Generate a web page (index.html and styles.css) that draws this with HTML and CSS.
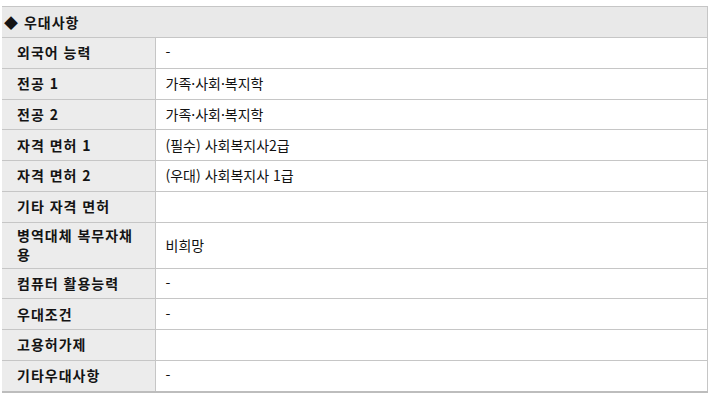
FILE: index.html
```html
<!DOCTYPE html>
<html lang="ko">
<head>
<meta charset="utf-8">
<title>우대사항</title>
<link rel="stylesheet" href="styles.css">
</head>
<body>
<table class="info">
  <colgroup><col class="c-label"><col class="c-value"></colgroup>
  <tr class="head"><th colspan="2"><span class="dia">◆</span> 우대사항</th></tr>
  <tr><th>외국어 능력</th><td>-</td></tr>
  <tr><th>전공 1</th><td>가족·사회·복지학</td></tr>
  <tr><th>전공 2</th><td>가족·사회·복지학</td></tr>
  <tr><th>자격 면허 1</th><td>(필수) 사회복지사2급</td></tr>
  <tr><th>자격 면허 2</th><td>(우대) 사회복지사 1급</td></tr>
  <tr><th>기타 자격 면허</th><td></td></tr>
  <tr class="tall"><th>병역대체 복무자채용</th><td>비희망</td></tr>
  <tr><th>컴퓨터 활용능력</th><td>-</td></tr>
  <tr><th>우대조건</th><td>-</td></tr>
  <tr><th>고용허가제</th><td></td></tr>
  <tr class="last"><th>기타우대사항</th><td>-</td></tr>
</table>
</body>
</html>
```
FILE: styles.css
```css
html, body {
  background: #ffffff;
}
body {
  margin: 6px 0 0 2px;
  font-family: "Noto Sans CJK KR", "Noto Sans", sans-serif;
  font-size: 14px;
  color: #111111;
}
.info {
  width: 706px;
  border-collapse: collapse;
  table-layout: fixed;
  border-top: 1px solid #c6c6c6;
  border-right: 1px solid #c6c6c6;
}
.c-label {
  width: 153px;
}
.info th,
.info td {
  height: 29.75px;
  padding: 0;
  line-height: 17px;
  vertical-align: middle;
  border-bottom: 1px solid #c6c6c6;
  text-align: left;
}
.info th {
  padding: 0 8px 0 15px;
  background: #ececec;
  border-right: 1px solid #c6c6c6;
  font-weight: bold;
  letter-spacing: 1px;
  color: #141414;
}
.info td {
  padding: 0 10px;
  font-weight: normal;
}
.info .head th {
  padding: 0 0 0 2px;
  height: 30px;
  background: #e9e9e9;
  border-right: none;
}
.dia {
  letter-spacing: 0;
  margin-right: 1px;
}
.info .tall th,
.info .tall td {
  height: 45px;
  line-height: 19px;
}
.info .last th,
.info .last td {
  border-bottom: 2px solid #bdbdbd;
}
```
